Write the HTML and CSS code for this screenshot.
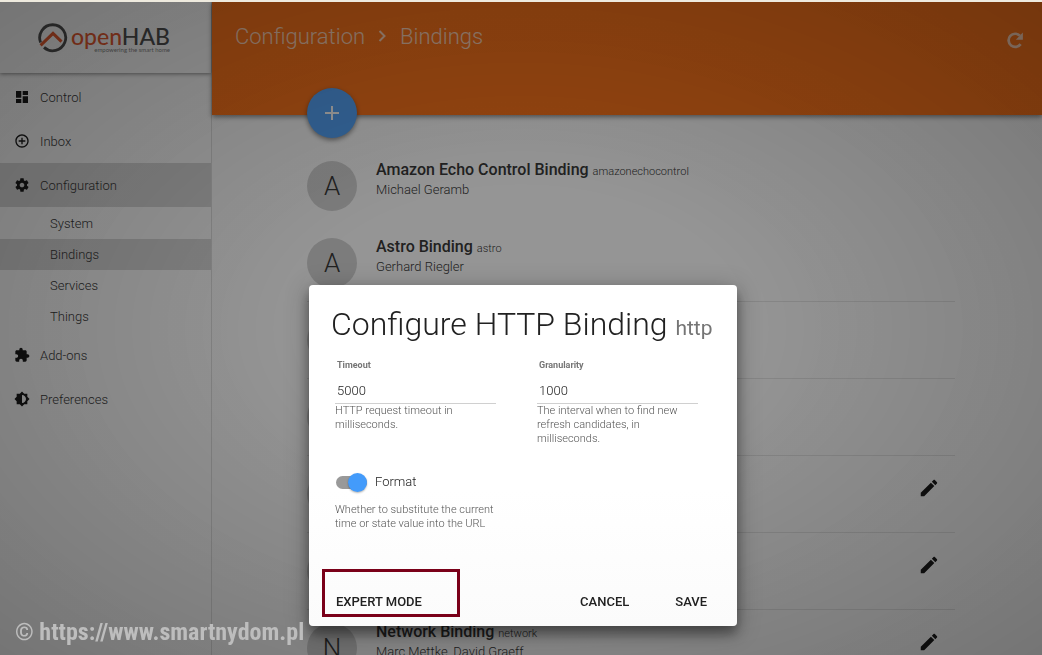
FILE: index.html
```html
<!DOCTYPE html>
<html lang="en">
<head>
  <meta charset="UTF-8">
  <meta name="viewport" content="width=device-width, initial-scale=1.0">
  <title>Configuration - Bindings</title>
  <link rel="stylesheet" href="styles.css">
</head>
<body>
  <div class="app">
    <aside class="sidebar">
      <div class="brand">
        <svg class="brand-mark" viewBox="0 0 30 30">
          <path d="M2.600 19.500A13 13 0 1 1 6 24.400" fill="none" stroke="#3c3c3c" stroke-width="2.800"/>
          <path d="M2.600 22.400L15 10.400l8.500 8.200" fill="none" stroke="#e64a19" stroke-width="3"/>
        </svg>
        <div class="brand-text">
          <div class="brand-name"><span>open</span>HAB</div>
          <div class="brand-tagline">empowering the smart home</div>
        </div>
      </div>

      <nav class="menu">
        <a href="#" class="menu-item">
          <svg class="icon" viewBox="0 0 24 24"><path d="M3 13h8V3H3v10zm0 8h8v-6H3v6zm10 0h8V11h-8v10zm0-18v6h8V3h-8z"/></svg>
          Control
        </a>
        <a href="#" class="menu-item">
          <svg class="icon" viewBox="0 0 24 24"><path d="M13 7h-2v4H7v2h4v4h2v-4h4v-2h-4V7zm-1-5C6.480 2 2 6.480 2 12s4.480 10 10 10 10-4.480 10-10S17.520 2 12 2zm0 18c-4.410 0-8-3.590-8-8s3.590-8 8-8 8 3.590 8 8-3.590 8-8 8z"/></svg>
          Inbox
        </a>
        <a href="#" class="menu-item active">
          <svg class="icon" viewBox="0 0 24 24"><path d="M19.430 12.980c.04-.32.07-.64.07-.98s-.03-.66-.07-.98l2.110-1.650c.19-.15.24-.42.12-.64l-2-3.460c-.12-.22-.39-.3-.61-.22l-2.490 1c-.52-.4-1.080-.73-1.690-.98l-.38-2.650C14.460 2.180 14.250 2 14 2h-4c-.25 0-.46.18-.49.42l-.38 2.650c-.61.25-1.170.59-1.690.98l-2.490-1c-.23-.09-.49 0-.61.22l-2 3.460c-.13.22-.07.49.12.64l2.110 1.650c-.04.32-.07.65-.07.98s.03.66.07.98l-2.110 1.650c-.19.15-.24.42-.12.64l2 3.460c.12.22.39.3.61.22l2.490-1c.52.4 1.080.73 1.690.98l.38 2.650c.03.24.24.42.49.42h4c.25 0 .46-.18.49-.42l.38-2.650c.61-.25 1.170-.59 1.690-.98l2.490 1c.23.09.49 0 .61-.22l2-3.460c.12-.22.07-.49-.12-.64l-2.110-1.650zM12 15.500c-1.930 0-3.500-1.570-3.500-3.500s1.570-3.500 3.500-3.500 3.500 1.570 3.500 3.500-1.570 3.500-3.500 3.500z"/></svg>
          Configuration
        </a>
        <div class="submenu">
          <a href="#">System</a>
          <a href="#" class="active">Bindings</a>
          <a href="#">Services</a>
          <a href="#">Things</a>
        </div>
        <a href="#" class="menu-item">
          <svg class="icon" viewBox="0 0 24 24"><path d="M20.500 11H19V7c0-1.100-.9-2-2-2h-4V3.500C13 2.120 11.880 1 10.500 1S8 2.120 8 3.500V5H4c-1.100 0-1.990.9-1.990 2v3.800H3.500c1.490 0 2.700 1.210 2.700 2.700s-1.210 2.700-2.700 2.700H2V20c0 1.100.9 2 2 2h3.800v-1.500c0-1.490 1.210-2.700 2.700-2.700 1.490 0 2.700 1.210 2.700 2.700V22H17c1.100 0 2-.9 2-2v-4h1.500c1.380 0 2.500-1.120 2.500-2.500S21.880 11 20.500 11z"/></svg>
          Add-ons
        </a>
        <a href="#" class="menu-item">
          <svg class="icon" viewBox="0 0 24 24"><path d="M20 15.310L23.310 12 20 8.690V4h-4.690L12 .69 8.690 4H4v4.690L.69 12 4 15.310V20h4.690L12 23.310 15.310 20H20v-4.690zM12 18V6c3.310 0 6 2.690 6 6s-2.690 6-6 6z"/></svg>
          Preferences
        </a>
      </nav>
    </aside>

    <main class="main">
      <header class="header">
        <h1 class="breadcrumb">
          Configuration
          <svg class="chevron" viewBox="0 0 8 12"><path d="M1 1l5 5-5 5" fill="none" stroke="#fff" stroke-width="2"/></svg>
          Bindings
        </h1>
        <button class="refresh" aria-label="Refresh">
          <svg viewBox="0 0 24 24"><path d="M19.500 17.500A8.800 8.800 0 1 1 18.500 6.200" fill="none" stroke="#fff" stroke-width="3.600"/><path d="M22.500 2v9.500H13z" fill="#fff"/></svg>
        </button>
        <button class="fab" aria-label="Add binding">
          <svg viewBox="0 0 24 24"><path d="M19 13h-6v6h-2v-6H5v-2h6V5h2v6h6v2z" fill="#fff"/></svg>
        </button>
      </header>

      <ul class="bindings">
        <li class="binding">
          <div class="avatar">A</div>
          <div class="binding-info">
            <h2>Amazon Echo Control Binding <small>amazonechocontrol</small></h2>
            <p>Michael Geramb</p>
          </div>
        </li>
        <li class="binding">
          <div class="avatar">A</div>
          <div class="binding-info">
            <h2>Astro Binding <small>astro</small></h2>
            <p>Gerhard Riegler</p>
          </div>
        </li>
        <li class="binding divided"><div class="avatar"></div></li>
        <li class="binding divided"><div class="avatar"></div></li>
        <li class="binding divided">
          <div class="avatar"></div>
          <button class="edit" aria-label="Edit"><svg viewBox="0 0 24 24"><path d="M3 17.250V21h3.750L17.810 9.940l-3.750-3.750L3 17.250zM20.710 7.040c.39-.39.39-1.020 0-1.410l-2.340-2.340c-.39-.39-1.020-.39-1.410 0l-1.830 1.830 3.750 3.750 1.830-1.830z"/></svg></button>
        </li>
        <li class="binding divided">
          <div class="avatar"></div>
          <button class="edit" aria-label="Edit"><svg viewBox="0 0 24 24"><path d="M3 17.250V21h3.750L17.810 9.940l-3.750-3.750L3 17.250zM20.710 7.040c.39-.39.39-1.020 0-1.410l-2.340-2.340c-.39-.39-1.020-.39-1.410 0l-1.830 1.830 3.750 3.750 1.830-1.830z"/></svg></button>
        </li>
        <li class="binding divided">
          <div class="avatar">N</div>
          <div class="binding-info">
            <h2>Network Binding <small>network</small></h2>
            <p>Marc Mettke, David Graeff</p>
          </div>
          <button class="edit" aria-label="Edit"><svg viewBox="0 0 24 24"><path d="M3 17.250V21h3.750L17.810 9.940l-3.750-3.750L3 17.250zM20.710 7.040c.39-.39.39-1.020 0-1.410l-2.340-2.340c-.39-.39-1.020-.39-1.410 0l-1.830 1.830 3.750 3.750 1.830-1.830z"/></svg></button>
        </li>
      </ul>
    </main>
  </div>

  <div class="backdrop">
    <form class="dialog">
      <h2 class="dialog-title">Configure HTTP Binding <small>http</small></h2>

      <div class="fields">
        <div class="field">
          <label for="timeout">Timeout</label>
          <input type="text" id="timeout" value="5000">
          <p class="hint">HTTP request timeout in milliseconds.</p>
        </div>
        <div class="field">
          <label for="granularity">Granularity</label>
          <input type="text" id="granularity" value="1000">
          <p class="hint">The interval when to find new refresh candidates, in milliseconds.</p>
        </div>
        <div class="field">
          <label class="switch" for="format">
            <input type="checkbox" id="format" checked>
            <span class="slider"></span>
            Format
          </label>
          <p class="hint">Whether to substitute the current time or state value into the URL</p>
        </div>
      </div>

      <div class="actions">
        <button type="button" class="expert">Expert mode</button>
        <button type="button">Cancel</button>
        <button type="button">Save</button>
      </div>
    </form>
  </div>

  <div class="watermark">© https://www.smartnydom.pl</div>
</body>
</html>
```
FILE: styles.css
```css
/* Base */
*,
*::before,
*::after {
  margin: 0;
  padding: 0;
  box-sizing: border-box;
}

body {
  font-family: Roboto, 'Liberation Sans', sans-serif;
  font-size: 13px;
  font-weight: 300;
  color: #212121;
  background: #fff;
  height: 100vh;
  overflow: hidden;
  border-top: 2px solid #eeeade;
}

button {
  font: inherit;
  color: inherit;
  border: none;
  background: none;
  cursor: pointer;
}

a {
  color: inherit;
  text-decoration: none;
}

.app {
  display: flex;
  height: 100%;
}

/* Sidebar */
.sidebar {
  flex: 0 0 212px;
  border-right: 1px solid #ddd;
}

.brand {
  display: flex;
  align-items: center;
  gap: 3px;
  height: 71px;
  padding-left: 38px;
  box-shadow: 0 1px 4px rgba(0, 0, 0, 0.5);
}

.brand-mark {
  width: 30px;
  height: 30px;
}

.brand-text {
  width: 99px;
}

.brand-name {
  font-family: Lato, sans-serif;
  font-size: 23px;
  font-weight: 500;
  line-height: 24px;
  color: #3c3c3c;
}

.brand-name span {
  color: #e64a19;
}

.brand-tagline {
  font-family: Lato, sans-serif;
  font-size: 6px;
  line-height: 4px;
  font-weight: 400;
  text-align: right;
  white-space: nowrap;
  color: #777;
}

.menu {
  padding-top: 2px;
}

.menu-item {
  display: flex;
  align-items: center;
  gap: 10px;
  height: 44px;
  padding-left: 14px;
}

.icon {
  width: 16px;
  height: 16px;
}

.submenu {
  padding: 1px 0;
}

.submenu a {
  display: block;
  height: 31px;
  line-height: 31px;
  padding-left: 50px;
}

.menu .active {
  background: #d6d6d6;
}

/* Header */
.main {
  flex: 1;
  min-width: 0;
}

.header {
  position: relative;
  display: flex;
  justify-content: space-between;
  height: 113px;
  padding: 20px 18px 0 23px;
  background: #ff6600;
  box-shadow: 0 2px 5px rgba(0, 0, 0, 0.5);
}

.breadcrumb {
  display: flex;
  align-items: center;
  gap: 13px;
  height: 28px;
  font-size: 22px;
  font-weight: 300;
  color: #fff;
}

.chevron {
  width: 9px;
  height: 12px;
}

.breadcrumb,
.refresh {
  opacity: 0.7;
}

.refresh {
  width: 18px;
  height: 38px;
}

.refresh svg {
  width: 18px;
  height: 18px;
}

.fab {
  position: absolute;
  left: 95px;
  bottom: -23px;
  width: 50px;
  height: 50px;
  border-radius: 50%;
  background: #439bfb;
  box-shadow: 0 2px 5px rgba(0, 0, 0, 0.5);
}

.fab svg {
  display: block;
  width: 24px;
  height: 24px;
  margin: 0 auto;
}

/* Bindings list */
.bindings {
  list-style: none;
  padding: 32px 87px 0 95px;
}

.binding {
  display: flex;
  align-items: center;
  height: 77px;
}

.divided {
  border-top: 1px solid #e4e4e4;
}

.avatar {
  width: 50px;
  height: 50px;
  margin-right: 19px;
  border-radius: 50%;
  background: #d0d0d0;
  font-size: 26px;
  line-height: 50px;
  text-align: center;
}

.binding-info {
  flex: 1;
  padding-bottom: 12px;
}

.binding-info h2 {
  font-size: 16px;
  line-height: 20px;
  font-weight: 500;
}

.binding-info small {
  font-size: 11px;
  line-height: 1;
  font-weight: 300;
}

.binding-info p {
  line-height: 20px;
}

.edit {
  width: 22px;
  height: 22px;
  margin: 0 15px 12px auto;
}

.edit svg {
  display: block;
  width: 22px;
  height: 22px;
}

/* Dialog */
.backdrop {
  position: fixed;
  inset: 2px 0 0;
  display: flex;
  justify-content: center;
  align-items: flex-start;
  padding: 283px 0 0 4px;
  background:
    radial-gradient(ellipse farthest-corner, transparent 30%, rgba(0, 0, 0, 0.22) 100%),
    rgba(33, 33, 33, 0.48);
}

.dialog {
  width: 428px;
  border-radius: 4px;
  background: linear-gradient(#fff 60%, #fbfbfb);
  box-shadow: 0 8px 12px rgba(0, 0, 0, 0.35), 0 4px 24px rgba(0, 0, 0, 0.3);
}

.dialog-title {
  padding: 19px 0 0 22px;
  font-size: 32px;
  line-height: 40px;
  font-weight: 300;
  white-space: nowrap;
}

.dialog-title small {
  font-size: 21px;
  line-height: 1;
  font-weight: 400;
  color: #757575;
}

.fields {
  display: grid;
  grid-template-columns: 161px 161px;
  column-gap: 41px;
  row-gap: 26px;
  padding: 13px 26px 0;
}

.field label {
  display: block;
  font-size: 9px;
  line-height: 16px;
  font-weight: 700;
  padding-left: 2px;
  color: #757575;
}

.field input[type="text"] {
  display: block;
  width: 100%;
  height: 31px;
  padding: 4px 2px 0;
  border: none;
  border-bottom: 1px solid #d0d0d0;
  background: none;
  font: inherit;
  color: inherit;
}

.hint {
  font-size: 11px;
  line-height: 14px;
  color: #555;
}

.field .switch {
  position: relative;
  display: flex;
  align-items: center;
  gap: 8px;
  height: 20px;
  margin-bottom: 11px;
  padding-left: 1px;
  font-size: 13px;
  font-weight: 300;
  color: #212121;
}

.switch input {
  position: absolute;
  opacity: 0;
}

.slider {
  position: relative;
  width: 31px;
  height: 13px;
  border-radius: 7px;
  background: #999;
}

.slider::before {
  content: '';
  position: absolute;
  top: -3px;
  right: 0;
  width: 19px;
  height: 19px;
  border-radius: 50%;
  background: #439bfb;
  box-shadow: 0 1px 2px rgba(0, 0, 0, 0.3);
}

.actions {
  display: flex;
  align-items: center;
  gap: 8px;
  padding: 52px 11px 7px 18px;
}

.actions button {
  position: relative;
  height: 36px;
  padding: 0 19px;
  font-weight: 500;
  text-transform: uppercase;
}

.actions .expert {
  margin-right: auto;
  padding: 0 9px;
}

/* Highlight frame */
.expert::after {
  content: '';
  position: absolute;
  top: -14px;
  left: -5px;
  width: 138px;
  height: 48px;
  border: 3px solid #7a0019;
}

/* Watermark */
.watermark {
  position: fixed;
  left: 15px;
  bottom: 8px;
  font-family: 'Liberation Sans Narrow', 'Roboto Condensed', 'Liberation Sans', sans-serif;
  font-size: 24px;
  line-height: 30px;
  font-weight: 700;
  white-space: nowrap;
  color: #bdbdbd;
}
```
